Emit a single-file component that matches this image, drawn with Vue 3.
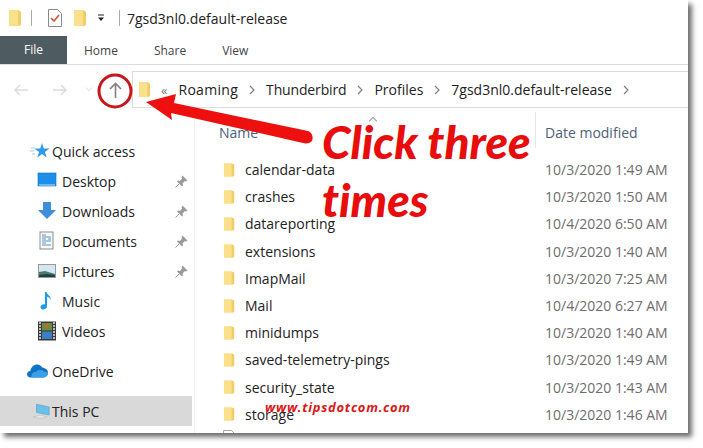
<template>
  <div class="page">
    <div class="window">
      <div class="titlebar">
        <svg class="tb-folder" width="14" height="18" viewBox="0 0 14 18"><path d="M1 1h9l3 2v13l-3 1H1z" fill="#fbe08c"/><path d="M10 1l3 2v13l-3 1z" fill="#f4cc66"/></svg>
        <span class="tb-sep"></span>
        <svg class="tb-check" width="16" height="20" viewBox="0 0 16 20"><path d="M1.500 1.500h9l4 4v13h-13z" fill="#fff" stroke="#8a8a8a"/><path d="M4 10l3 3 5-6" fill="none" stroke="#d9562b" stroke-width="1.600"/></svg>
        <svg class="tb-folder2" width="14" height="18" viewBox="0 0 14 18"><path d="M1 1h9l3 2v13l-3 1H1z" fill="#fbe08c"/><path d="M10 1l3 2v13l-3 1z" fill="#f4cc66"/></svg>
        <svg class="tb-drop" width="8" height="8" viewBox="0 0 8 8"><path d="M1 1h6" stroke="#222" stroke-width="1"/><path d="M1 3.500h6L4 7z" fill="#222"/></svg>
        <span class="tb-sep second"></span>
        <span class="tb-title">7gsd3nl0.default-release</span>
      </div>
      <div class="tabs">
        <div class="tab-file">File</div>
        <div class="tab">Home</div>
        <div class="tab">Share</div>
        <div class="tab">View</div>
      </div>
      <div class="navrow">
        <div class="navbtns">
          <svg width="16" height="14" viewBox="0 0 16 14"><path d="M15 7H2M7 2L2 7l5 5" fill="none" stroke="#dcdcdc" stroke-width="1.500"/></svg>
          <svg class="fwd" width="16" height="14" viewBox="0 0 16 14"><path d="M1 7h13M9 2l5 5-5 5" fill="none" stroke="#dcdcdc" stroke-width="1.500"/></svg>
          <svg class="down" width="8" height="5" viewBox="0 0 8 5"><path d="M0.500 0.500L4 4l3.500-3.500" fill="none" stroke="#dcdcdc"/></svg>
          <svg class="up" width="13" height="16" viewBox="0 0 13 16"><path d="M6.500 16V2M1 7l5.500-5.500L12 7" fill="none" stroke="#808080" stroke-width="1.600"/></svg>
        </div>
        <div class="address">
          <svg width="13" height="17" viewBox="0 0 14 18"><path d="M1 1h9l3 2v13l-3 1H1z" fill="#fbe08c"/><path d="M10 1l3 2v13l-3 1z" fill="#f4cc66"/></svg>
          <span class="chev-double">«</span>
          <template v-for="c in crumbs" :key="c">
            <span class="crumb">{{ c }}</span>
            <svg class="sep" width="6" height="10" viewBox="0 0 6 10"><path d="M1 1l4 4-4 4" fill="none" stroke="#808080" stroke-width="1.200"/></svg>
          </template>
        </div>
      </div>
      <div class="main">
        <nav class="sidebar">
          <div class="s-row top first">
            <svg width="20" height="17" viewBox="0 0 20 17"><path d="M12 0l1.800 5.500H19.500l-4.600 3.400 1.700 5.600-4.600-3.400-4.700 3.400 1.800-5.600L4.500 5.500h5.700z" fill="#2f9be8"/><path d="M1 5h4M0 8h4M2 11h3" stroke="#9fd0f2"/></svg>
            <span>Quick access</span>
          </div>
          <div v-for="item in quick" :key="item.name" class="s-row sub">
            <svg class="s-icon" width="20" height="20" viewBox="0 0 20 20" v-html="item.icon"></svg>
            <span class="s-name">{{ item.name }}</span>
            <svg v-if="item.pin" class="pin" width="13" height="13" viewBox="0 0 13 13"><path d="M7.500 0.500l5 5-1.500 1-1-0.500-2.500 2.500 0.500 2-1 1-5-5 1-1 2 0.500L7 3.500 6.500 2.500z" fill="#9a9a9a"/><path d="M4 9L0.500 12.500" stroke="#9a9a9a"/></svg>
          </div>
          <div class="s-row top drive">
            <svg width="21" height="14" viewBox="0 0 21 14"><path d="M3.500 13.500C1.500 13.500 0 12 0 10.300 0 8.400 1.500 7 3.300 6.900 4 3 7 0.500 10.200 0.500c2.300 0 4.300 1.300 5.300 3.200 3 0 5.500 2.300 5.500 5.100 0 2.700-2 4.700-4.500 4.700z" fill="#1272c4"/><path d="M5 13.500c-1.500-3 1-6 4-5.500 1.500-2.500 6-3 8-0.300 2 .2 4 1.100 4 1.100 0 2.700-2 4.700-4.500 4.700z" fill="#38a1e8"/></svg>
            <span>OneDrive</span>
          </div>
          <div class="s-row top active">
            <svg width="18" height="17" viewBox="0 0 20 18"><path d="M5 1l14 3v9L5 10z" fill="#6cc0ec" stroke="#4a93c0" stroke-width=".6"/><path d="M1 15l9-2 7 2-8 2z" fill="#e4e4e4" stroke="#b4b4b4" stroke-width=".5"/></svg>
            <span>This PC</span>
          </div>
        </nav>
        <div class="files">
          <div class="head">
            <div class="h-name">Name<span class="caret"></span></div>
            <div class="h-date">Date modified</div>
          </div>
          <div class="list">
            <div v-for="f in files" :key="f.name" class="f-row">
              <svg width="12" height="16" viewBox="0 0 14 18"><path d="M1 1h9l3 2v13l-3 1H1z" fill="#fbe08c"/><path d="M10 1l3 2v13l-3 1z" fill="#f4cc66"/></svg>
              <span class="f-name">{{ f.name }}</span>
              <span class="f-date">{{ f.date }}</span>
            </div>
            <div class="f-row cut">
              <svg width="13" height="16" viewBox="0 0 13 16"><path d="M.500.500h8l4 4v11H.500z" fill="#fff" stroke="#a8a8a8"/></svg>
            </div>
          </div>
        </div>
      </div>
    </div>

    <!-- annotations drawn on top of the screenshot -->
    <svg class="overlay" width="703" height="448" viewBox="0 0 703 448">
      <circle cx="115" cy="91" r="16" fill="none" stroke="#c8161a" stroke-width="3"/>
      <path d="M146 102L176 94 174 103 308 131C314 133 314 142 309 143 307 143.500 305 143.500 303 143L171 113 172 120z" fill="#ee0f0f"/>
    </svg>
    <div class="note">
      <div>Click three</div>
      <div>times</div>
    </div>
    <div class="url">www.tipsdotcom.com</div>
  </div>
</template>

<script setup>
const crumbs = ["Roaming", "Thunderbird", "Profiles", "7gsd3nl0.default-release"];

const quick = [
  {
    name: "Desktop",
    pin: true,
    icon: '<rect x="1" y="2" width="18" height="13" fill="#1d8fea" stroke="#0f6fc0" stroke-width=".6"/><path d="M2 14h16" stroke="#bfe3fb"/>',
  },
  {
    name: "Downloads",
    pin: true,
    icon: '<path d="M6 1h8v8h5l-9 9-9-9h5z" fill="#3d8fdc"/>',
  },
  {
    name: "Documents",
    pin: true,
    icon: '<rect x="3" y="1" width="13" height="17" fill="#f6f8fa" stroke="#8d8d8d"/><path d="M5 4h4M5 6h9M5 8h4M11 8h3M5 10h9M5 12h4M5 14h9" stroke="#5a96c4"/>',
  },
  {
    name: "Pictures",
    pin: true,
    icon: '<rect x="1.500" y="3.500" width="17" height="13" fill="#d4e6f4" stroke="#9a9a9a"/><path d="M2 11l6-1 10 3v3H2z" fill="#4d7a66"/><path d="M2 14l8-1 8 1v2H2z" fill="#20404a"/>',
  },
  {
    name: "Music",
    pin: false,
    icon: '<path d="M8 1h1.500c.5 3 5 4 4 8-.5-2-2-3-3.500-3.300V15c0 2-2 3.500-4 3.500-1.500 0-2.500-1-2.500-2.200 0-2 2-3.300 4.500-3z" fill="#1a9be6"/>',
  },
  {
    name: "Videos",
    pin: false,
    icon: '<rect x="1" y="0.500" width="18" height="19" fill="#3a3a3a"/><rect x="5" y="2" width="10" height="7.500" fill="#6a8c3c"/><rect x="5" y="10.500" width="10" height="7.500" fill="#3d7fc4"/><path d="M2 2h2M2 5h2M2 8h2M2 11h2M2 14h2M2 17h2M16 2h2M16 5h2M16 8h2M16 11h2M16 14h2M16 17h2" stroke="#e8e8e8" stroke-width="1.400"/><circle cx="10" cy="5" r="2" fill="#c8682c"/>',
  },
];

const files = [
  { name: "calendar-data", date: "10/3/2020 1:49 AM" },
  { name: "crashes", date: "10/3/2020 1:50 AM" },
  { name: "datareporting", date: "10/4/2020 6:50 AM" },
  { name: "extensions", date: "10/3/2020 1:40 AM" },
  { name: "ImapMail", date: "10/3/2020 7:25 AM" },
  { name: "Mail", date: "10/4/2020 6:27 AM" },
  { name: "minidumps", date: "10/3/2020 1:40 AM" },
  { name: "saved-telemetry-pings", date: "10/3/2020 1:49 AM" },
  { name: "security_state", date: "10/3/2020 1:43 AM" },
  { name: "storage", date: "10/3/2020 1:46 AM" },
];
</script>

<style>
html,
body {
  margin: 0;
  background: #fff;
}
</style>

<style scoped>
.page {
  position: relative;
  width: 703px;
  height: 448px;
  overflow: hidden;
  background: #fff;
  font-family: "Open Sans", "Noto Sans", sans-serif;
  color: #222;
}
.window {
  width: 688px;
  height: 433px;
  background: #fff;
  display: flex;
  flex-direction: column;
  box-shadow: 4px 4px 5px #6e6e6e;
  overflow: hidden;
}
.titlebar {
  height: 36px;
  display: flex;
  align-items: center;
  padding-left: 8px;
  box-sizing: border-box;
}
.tb-sep {
  width: 1px;
  height: 16px;
  background: #a8a8a8;
  margin-left: 9px;
}
.tb-sep.second {
  margin-left: 14px;
}
.tb-check {
  margin-left: 15px;
}
.tb-folder2 {
  margin-left: 10px;
}
.tb-drop {
  margin-left: 10px;
}
.tb-title {
  font-size: 14px;
  margin-left: 7px;
  color: #222;
}
.tabs {
  height: 29px;
  display: flex;
  align-items: center;
  gap: 36px;
  border-bottom: 1px solid #dcdcdc;
  box-sizing: border-box;
  font-size: 12px;
  color: #444;
}
.tab-file {
  width: 67px;
  height: 28px;
  margin-right: -19px;
  background: #4e5c62;
  color: #fff;
  text-align: center;
  line-height: 28px;
}
.navrow {
  display: flex;
  height: 43px;
  padding-top: 6px;
  box-sizing: border-box;
}
.navbtns {
  width: 132px;
  display: flex;
  align-items: center;
  padding-left: 13px;
  box-sizing: border-box;
}
.fwd {
  margin-left: 23px;
}
.down {
  margin-left: 17px;
}
.up {
  margin-left: 16px;
}
.address {
  flex: 1;
  display: flex;
  align-items: center;
  padding-left: 5px;
  border: 1px solid #dcdcdc;
  border-right: 0;
  font-size: 14px;
  color: #222;
}
.chev-double {
  margin-left: 10px;
  margin-right: 11px;
  color: #777;
  font-size: 13px;
}
.sep {
  margin: 1px 11px 0 11px;
}
.crumb:nth-of-type(2) {
  letter-spacing: 0.300px;
}
.crumb:nth-of-type(3) {
  letter-spacing: -0.150px;
}
.main {
  flex: 1;
  display: flex;
  min-height: 0;
}
.sidebar {
  width: 195px;
  box-sizing: border-box;
  border-right: 1px solid #f0f0f0;
  padding-top: 28px;
  font-size: 14px;
}
.s-row {
  height: 30px;
  display: flex;
  align-items: center;
  color: #222;
}
.s-row.top {
  padding-left: 30px;
}
.s-row.top > svg {
  margin-right: 1px;
}
.s-row.top > span {
  margin-left: 1px;
}
.s-row.sub {
  padding-left: 37px;
}
.s-name {
  flex: 1;
  margin-left: 5px;
}
.s-row.drive {
  margin-top: 10px;
  padding-left: 27px;
}
.s-row.drive > svg {
  margin-right: 3px;
}
.s-row.active {
  margin-top: 10px;
  width: 192px;
  box-sizing: border-box;
  background: #d9d9d9;
  padding-left: 32px;
}
.pin {
  margin-right: 6px;
}
.files {
  flex: 1;
  display: flex;
  flex-direction: column;
  min-width: 0;
  font-size: 14px;
}
.head {
  height: 48px;
  display: flex;
  color: #4c607a;
  flex: none;
}
.h-name {
  position: relative;
  width: 341px;
  padding: 11px 0 0 24px;
  box-sizing: border-box;
  border-right: 1px solid #e6e6e6;
  height: 36px;
  margin-top: 4px;
}
.caret {
  position: absolute;
  left: 175px;
  top: 6px;
  width: 5px;
  height: 5px;
  border-left: 1px solid #999;
  border-top: 1px solid #999;
  transform: rotate(45deg);
}
.h-date {
  padding: 11px 0 0 9px;
  margin-top: 4px;
  white-space: nowrap;
}
.f-row {
  height: 27.200px;
  display: flex;
  align-items: center;
  padding-left: 28px;
}
.f-row.cut {
  align-items: flex-start;
  padding-top: 2px;
  box-sizing: border-box;
}
.f-name {
  width: 300px;
  margin-left: 10px;
  color: #222;
  white-space: nowrap;
}
.f-date {
  color: #6d6d6d;
  white-space: nowrap;
}
.overlay {
  position: absolute;
  left: 0;
  top: 0;
}
.note {
  position: absolute;
  left: 322px;
  top: 113px;
  font-family: Lato, "Open Sans", sans-serif;
  font-style: italic;
  font-weight: 900;
  font-size: 46px;
  font-variant-ligatures: none;
  line-height: 58px;
  color: #e80c0c;
  white-space: nowrap;
}
.url {
  position: absolute;
  left: 265px;
  top: 398px;
  font-family: "Open Sans", sans-serif;
  font-style: italic;
  font-weight: 700;
  font-size: 13px;
  letter-spacing: 0.700px;
  color: #d81818;
  white-space: nowrap;
}
</style>
